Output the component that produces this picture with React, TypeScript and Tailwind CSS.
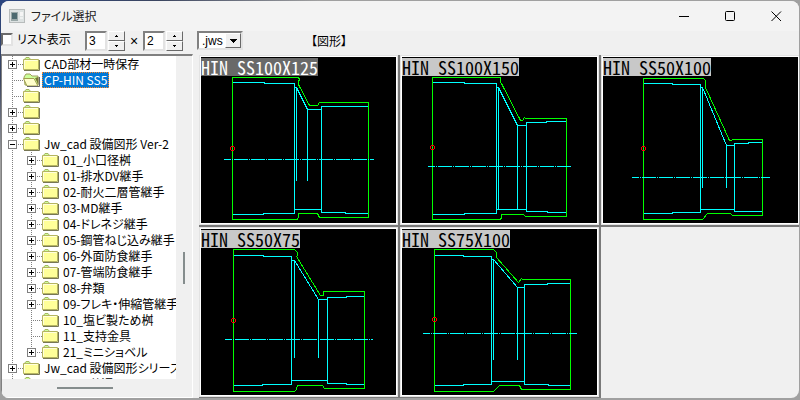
import { useState } from "react";

type TreeNode = {
  label: string;
  level: 1 | 2;
  box?: "+" | "-";
  open?: boolean;
  last?: boolean;
};

type Part = {
  name: string;
  outline: string;
  inner: string;
  axis: [number, number, number];
  origin: [number, number];
};

const nodes: TreeNode[] = [
  { label: "CAD部材一時保存", level: 1, box: "+" },
  { label: "CP-HIN SS5", level: 1, open: true },
  { label: "", level: 1 },
  { label: "", level: 1, box: "+" },
  { label: "", level: 1, box: "+" },
  { label: "Jw_cad 設備図形 Ver-2", level: 1, box: "-" },
  { label: "01_小口径桝", level: 2, box: "+" },
  { label: "01-排水DV継手", level: 2, box: "+" },
  { label: "02-耐火二層管継手", level: 2, box: "+" },
  { label: "03-MD継手", level: 2, box: "+" },
  { label: "04-ドレネジ継手", level: 2, box: "+" },
  { label: "05-鋼管ねじ込み継手", level: 2, box: "+" },
  { label: "06-外面防食継手", level: 2, box: "+" },
  { label: "07-管端防食継手", level: 2, box: "+" },
  { label: "08-弁類", level: 2, box: "+" },
  { label: "09-フレキ・伸縮管継手", level: 2, box: "+" },
  { label: "10_塩ビ製ため桝", level: 2 },
  { label: "11_支持金具", level: 2 },
  { label: "21_ミニショベル", level: 2, box: "+", last: true },
  { label: "Jw_cad 設備図形シリーズ", level: 1, box: "+" },
  { label: "Jw_cad 共通", level: 1 },
];

const parts: Part[] = [
  {
    name: "HIN SS100X125",
    outline:
      "M31 20H97L98 22L97 24V27L108 48H116L118 45H167V160H118L116 156H97V159L96 162H31Z",
    inner:
      "M31 25H63M63 26H93V156H62M62 157H31M93 30H95V123M95 30L106 52H120M106 52V123M167 49H120V155H144M144 156H167M93 152H120",
    axis: [23, 172, 102],
    origin: [31, 91],
  },
  {
    name: "HIN SS100X150",
    outline:
      "M30 20H98V25L99 26L118 63H120L122 60L123 61H164V159H123L121 157H99V160L98 162H30Z",
    inner:
      "M30 25H62M62 26H94V156H62M62 157H30M94 30H96V152M96 30L115 68H124M115 68V152M144 65H124V154H145M144 64H164M145 155H164M94 152H124",
    axis: [26, 169, 109],
    origin: [30, 90],
  },
  {
    name: "HIN SS50X100",
    outline:
      "M40 21H100L102 23V30L126 83H128L129 82H159V158H129L127 156H104L99 162H40Z",
    inner:
      "M40 26H69M69 27H97V155H69M69 156H40M97 30H99V130M99 30L123 88H131M123 88V130M145 86H131V154H159M145 85H159M97 152H131",
    axis: [29, 166, 120],
    origin: [40, 91],
  },
  {
    name: "HIN SS50X75",
    outline:
      "M32 20H93L96 23V26L95 27L119 66H122V62H163V159H123L121 156H96L95 160L93 162H32Z",
    inner:
      "M32 26H62M62 27H90V155H61M61 156H32M90 31H93V128M93 31L117 70H126M117 70V128M145 68H126V154H145M145 67H163M145 155H163M90 151H126",
    axis: [24, 171, 110],
    origin: [32, 91],
  },
  {
    name: "HIN SS75X100",
    outline:
      "M32 20H91L94 23V28L116 53L119 49L120 50H168V160H119L117 156H97L91 162H32Z",
    inner:
      "M32 26H61M61 27H89V155H61M61 156H32M89 30H91V130M91 30L115 58H122M115 58V130M145 55H122V155H146M145 54H168M146 156H168M89 152H122",
    axis: [21, 174, 104],
    origin: [32, 90],
  },
];

function Folder({ open }: { open?: boolean }) {
  return (
    <svg width="17" height="16" viewBox="0 0 17 16" className="shrink-0">
      {open ? (
        <>
          <path d="M1 5L3 2H7L9 4H15V13H2Z" fill="#ccff99" stroke="#a0a060" />
          <path d="M0.5 6.5H11L15 14H4Z" fill="#ffffcc" stroke="#a0a050" />
          <path d="M12 6L15.5 13V5" fill="#777733" />
          <path d="M4 14.5H16.5V5" fill="none" stroke="#666" />
        </>
      ) : (
        <>
          <path d="M1 4L3 1.500H6L8 4Z" fill="#ccff99" stroke="#a5b560" />
          <path d="M0.500 3.500H15.500V13.500H0.500Z" fill="#ffff99" stroke="#b5b560" />
          <path d="M1.500 12.500V4.500H14.500" fill="none" stroke="#ffffdd" />
          <path d="M1 14.500H16.500V4" fill="none" stroke="#777755" />
        </>
      )}
    </svg>
  );
}

function Branch({ box, last }: { box?: "+" | "-"; last?: boolean }) {
  return (
    <svg width="20" height="16" viewBox="0 0 20 16" className="shrink-0" shapeRendering="crispEdges">
      <g stroke="#808080" strokeDasharray="1 1">
        <path d={last ? "M9.500 0V8" : "M9.500 0V16"} />
        <path d="M9 8.500H20" />
      </g>
      {box && (
        <>
          <rect x="5.500" y="4.500" width="8" height="8" fill="#fff" stroke="#808080" />
          <path d={box === "+" ? "M7 8.500H12M9.500 6V11" : "M7 8.500H12"} stroke="#000" />
        </>
      )}
    </svg>
  );
}

function TreeRow({ node, selected, onSelect }: { node: TreeNode; selected: boolean; onSelect: () => void }) {
  return (
    <li className="flex h-4 items-center">
      {node.level === 2 && (
        <svg width="19" height="16" className="shrink-0" shapeRendering="crispEdges">
          <path d="M9.500 0V16" stroke="#808080" strokeDasharray="1 1" />
        </svg>
      )}
      <Branch box={node.box} last={node.last} />
      <Folder open={node.open} />
      {node.label && (
        <button
          onClick={onSelect}
          className={
            selected
              ? "ml-0.5 h-4 border border-dotted border-[#ff8728] bg-[#0078d7] px-px text-xs leading-[14px] whitespace-nowrap text-white"
              : "ml-1 h-4 text-xs leading-4 whitespace-nowrap text-black"
          }
        >
          {node.label}
        </button>
      )}
    </li>
  );
}

function PartCell({ part, selected, onSelect }: { part: Part; selected: boolean; onSelect: () => void }) {
  const [x1, x2, y] = part.axis;
  return (
    <button
      onClick={onSelect}
      className="block border-r-2 border-b-2 border-[#7a7a7a] text-left"
    >
      <span className="block border border-[#e3e3e3]">
        <span className="relative block border border-white bg-black">
          <svg
            viewBox="-0.5 -0.5 195 166"
            preserveAspectRatio="xMinYMin meet"
            className="block h-[166px] w-full"
            fill="none"
            shapeRendering="crispEdges"
          >
            <path d={part.inner} stroke="#00ffff" strokeLinecap="square" />
            <path d={part.outline} stroke="#00ff00" />
            <path d={`M${x1 - 0.5} ${y}H${x2 + 0.5}`} stroke="#00ffff" strokeDasharray="14 1 1 1" strokeDashoffset="7" />
            <circle cx={part.origin[0]} cy={part.origin[1]} r="2" stroke="#ff0000" />
          </svg>
          <span
            className={
              selected
                ? "absolute top-px left-0 h-[18px] bg-[#696969] font-['Noto_Sans_CJK_JP',monospace] text-lg leading-[18px] whitespace-pre text-white [font-feature-settings:'hwid']"
                : "absolute top-px left-0 h-[18px] bg-[#c8c8c8] font-['Noto_Sans_CJK_JP',monospace] text-lg leading-[18px] whitespace-pre text-black [font-feature-settings:'hwid']"
            }
          >
            {part.name}
          </span>
        </span>
      </span>
    </button>
  );
}

function Spinner({ label, value, onChange }: { label: string; value: number; onChange: (n: number) => void }) {
  const arrow =
    "flex h-[10px] w-[17px] items-center justify-center border border-t-white border-r-[#696969] border-b-[#696969] border-l-white bg-[#f0f0f0]";
  return (
    <div className="flex gap-px">
      <input
        aria-label={label}
        value={value}
        onChange={(e) => onChange(Number(e.target.value) || 1)}
        className="h-5 w-[22px] border-2 border-t-[#808080] border-r-[#e3e3e3] border-b-[#e3e3e3] border-l-[#808080] bg-white pl-0.5 text-xs leading-4 outline-none"
      />
      <div className="flex flex-col">
        <button aria-label={`${label} +`} onClick={() => onChange(value + 1)} className={arrow}>
          <svg width="3" height="2" shapeRendering="crispEdges">
            <path d="M1 0H2V1H3V2H0V1H1Z" />
          </svg>
        </button>
        <button aria-label={`${label} -`} onClick={() => onChange(Math.max(1, value - 1))} className={arrow}>
          <svg width="3" height="2" shapeRendering="crispEdges">
            <path d="M0 0H3V1H2V2H1V1H0Z" />
          </svg>
        </button>
      </div>
    </div>
  );
}

export default function App() {
  const [cols, setCols] = useState(3);
  const [rows, setRows] = useState(2);
  const [list, setList] = useState(false);
  const [folder, setFolder] = useState(1);
  const [current, setCurrent] = useState(0);

  return (
    <div className="flex h-screen flex-col overflow-hidden bg-[#a0a0a0] bg-[linear-gradient(to_bottom_right,#2b4580_0%,#3b4560_10%,#a0a0a0_20%)] pt-px pr-px pb-0.5 pl-px font-['Liberation_Sans','Noto_Sans_CJK_JP',sans-serif] text-black">
      <div className="flex min-h-0 flex-1 flex-col overflow-hidden rounded-lg bg-[#f0f0f0]">
        <header className="flex h-[30px] shrink-0 items-center bg-[#f3f3f3] pl-2">
          <svg width="16" height="14" viewBox="0 0 16 14">
            <rect x="0.500" y="0.500" width="15" height="13" fill="#dde2e2" stroke="#b8bcbc" />
            <rect x="2" y="3" width="7" height="9" fill="#9aa8a8" />
            <rect x="3" y="4" width="5" height="6" fill="#4c6a70" />
            <path d="M11 3H14V7H11Z" fill="#f5f5f5" />
            <path d="M11 9H14" stroke="#fff" />
          </svg>
          <h1 className="ml-1.5 flex-1 font-['Noto_Sans_CJK_JP',sans-serif] text-xs text-[#222]">
            <span className="[font-feature-settings:'palt']">ファイル選択</span>
          </h1>
          <button aria-label="最小化" className="flex h-full w-[45px] items-center justify-center">
            <svg width="11" height="11" stroke="#000">
              <path d="M0 5.500H10" />
            </svg>
          </button>
          <button aria-label="最大化" className="flex h-full w-[46px] items-center justify-center">
            <svg width="11" height="11" fill="none" stroke="#000">
              <rect x="0.500" y="0.500" width="9" height="9" rx="1" />
            </svg>
          </button>
          <button aria-label="閉じる" className="flex h-full w-[46px] items-center justify-center">
            <svg width="11" height="11" stroke="#000">
              <path d="M0.500 0.500L10 10M10 0.500L0.500 10" />
            </svg>
          </button>
        </header>

        <div className="flex h-[23px] shrink-0 items-start">
          <label className="flex w-[84px] items-center gap-1 font-['Noto_Sans_CJK_JP',sans-serif] text-xs leading-4 [font-feature-settings:'palt']">
            <input
              type="checkbox"
              checked={list}
              onChange={(e) => setList(e.target.checked)}
              className="h-[13px] w-3 appearance-none border-2 border-t-[#696969] border-r-[#e3e3e3] border-b-[#e3e3e3] border-l-[#696969] bg-white checked:bg-black"
            />
            リスト表示
          </label>
          <Spinner label="列" value={cols} onChange={setCols} />
          <span className="w-[18px] text-center text-sm leading-5">×</span>
          <Spinner label="行" value={rows} onChange={setRows} />
          <div className="relative ml-3.5">
            <select
              aria-label="種類"
              className="block h-[19px] w-[46px] appearance-none border-2 border-t-[#808080] border-r-[#e3e3e3] border-b-[#e3e3e3] border-l-[#808080] bg-white pl-[3px] text-xs leading-[14px] outline-none"
            >
              <option>.jws</option>
              <option>.jwk</option>
            </select>
            <span className="pointer-events-none absolute top-0.5 right-0.5 flex h-[15px] w-4 items-center justify-center border border-t-white border-r-[#696969] border-b-[#696969] border-l-white bg-[#f0f0f0]">
              <svg width="7" height="4" shapeRendering="crispEdges">
                <path d="M0 0H7V1H6V2H5V3H4V4H3V3H2V2H1V1H0Z" />
              </svg>
            </span>
          </div>
          <span className="ml-[68px] font-['Noto_Sans_CJK_JP',sans-serif] text-xs leading-5 [font-feature-settings:'palt']">
            【図形】
          </span>
        </div>

        <main className="flex min-h-0 flex-1">
          <nav className="flex w-[192px] shrink-0 flex-col border-t-2 border-r border-b border-l border-t-[#808080] border-r-white border-b-white border-l-[#808080]">
            <div className="flex min-h-0 flex-1">
              <ul className="w-[174px] overflow-hidden bg-white pl-px font-['Noto_Sans_CJK_JP',sans-serif] [font-feature-settings:'palt']">
                {nodes.map((node, i) => (
                  <TreeRow key={i} node={node} selected={folder === i} onSelect={() => setFolder(i)} />
                ))}
              </ul>
              <div className="flex-1 pt-[196px] pl-[7px]">
                <div className="h-8 w-0.5 bg-[#858d8d]" />
              </div>
            </div>
            <div className="h-[18px] shrink-0 pt-2 pl-[55px]">
              <div className="h-0.5 w-14 bg-[#858d8d]" />
            </div>
          </nav>
          <section className="mt-px -mr-[3px] ml-[6px] grid flex-1 grid-cols-3 content-start">
            {parts.map((part, i) => (
              <PartCell key={part.name} part={part} selected={current === i} onSelect={() => setCurrent(i)} />
            ))}
          </section>
        </main>
      </div>
    </div>
  );
}
